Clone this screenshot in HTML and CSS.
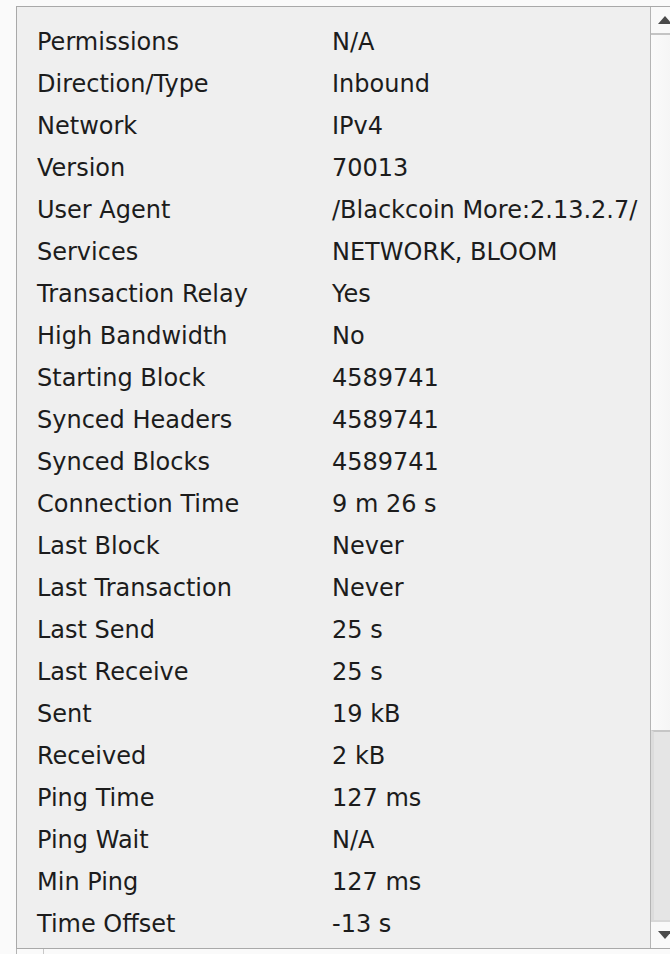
FILE: index.html
```html
<!DOCTYPE html>
<html>
<head>
<meta charset="utf-8">
<link rel="stylesheet" href="styles.css">
</head>
<body>
<div class="frame">
  <div class="panel">
    <div class="grid">
      <div class="k">Permissions</div><div class="v">N/A</div>
      <div class="k">Direction/Type</div><div class="v">Inbound</div>
      <div class="k">Network</div><div class="v">IPv4</div>
      <div class="k">Version</div><div class="v">70013</div>
      <div class="k">User Agent</div><div class="v">/Blackcoin More:2.13.2.7/</div>
      <div class="k">Services</div><div class="v">NETWORK, BLOOM</div>
      <div class="k">Transaction Relay</div><div class="v">Yes</div>
      <div class="k">High Bandwidth</div><div class="v">No</div>
      <div class="k">Starting Block</div><div class="v">4589741</div>
      <div class="k">Synced Headers</div><div class="v">4589741</div>
      <div class="k">Synced Blocks</div><div class="v">4589741</div>
      <div class="k">Connection Time</div><div class="v">9 m 26 s</div>
      <div class="k">Last Block</div><div class="v">Never</div>
      <div class="k">Last Transaction</div><div class="v">Never</div>
      <div class="k">Last Send</div><div class="v">25 s</div>
      <div class="k">Last Receive</div><div class="v">25 s</div>
      <div class="k">Sent</div><div class="v">19 kB</div>
      <div class="k">Received</div><div class="v">2 kB</div>
      <div class="k">Ping Time</div><div class="v">127 ms</div>
      <div class="k">Ping Wait</div><div class="v">N/A</div>
      <div class="k">Min Ping</div><div class="v">127 ms</div>
      <div class="k">Time Offset</div><div class="v">-13 s</div>
    </div>
  </div>
  <div class="scrollbar">
    <div class="btn up"><span class="tri-up"></span></div>
    <div class="track"></div>
    <div class="thumb"></div>
    <div class="btn down"><span class="tri-down"></span></div>
  </div>
</div>
<div class="below">
  <div class="below-box"></div>
</div>
</body>
</html>
```

FILE: styles.css
```css
html, body {
  margin: 0;
  padding: 0;
  background: #fafafa;
  overflow: hidden;
  width: 670px;
  height: 954px;
}
body {
  font-family: "DejaVu Sans", "Liberation Sans", sans-serif;
}
.frame {
  margin-top: 6px;
  margin-left: 16px;
  width: 680px;
  height: 941px;
  display: flex;
  border: 1px solid #a9a9a9;
  border-right: none;
  background: #efefef;
}
.panel {
  width: 633px;
  box-sizing: border-box;
  padding: 14px 0 0 20px;
  overflow: hidden;
}
.grid {
  display: grid;
  grid-template-columns: 295px auto;
  grid-auto-rows: 42px;
  font-size: 24px;
  line-height: 42px;
  color: #1c1c1c;
}
.k, .v {
  white-space: nowrap;
}
.scrollbar {
  width: 28px;
  flex: none;
  display: flex;
  flex-direction: column;
  border-left: 1px solid #b4b4b4;
  background: #f4f4f4;
}
.btn {
  display: flex;
  justify-content: center;
  align-items: center;
  background: #f9f9f9;
  flex: none;
}
.btn.up {
  height: 26px;
  border-bottom: 2px solid #c4c4c4;
}
.btn.down {
  height: 26px;
  border-top: 2px solid #d8d8d8;
}
.tri-up {
  width: 0;
  height: 0;
  border-left: 7px solid transparent;
  border-right: 7px solid transparent;
  border-bottom: 8px solid #4a4a4a;
}
.tri-down {
  width: 0;
  height: 0;
  border-left: 7px solid transparent;
  border-right: 7px solid transparent;
  border-top: 8px solid #4a4a4a;
}
.track {
  height: 695px;
  flex: none;
  background: linear-gradient(to right, #fafafa, #f3f3f3);
}
.thumb {
  flex: 1;
  background: #e5e5e5;
  border-top: 2px solid #c6c6c6;
  border-left: 3px solid #dcdcdc;
}
.below {
  padding-left: 16px;
}
.below-box {
  width: 26px;
  height: 6px;
  border-left: 1px solid #b4b4b4;
  border-right: 1px solid #c8c8c8;
}
```
